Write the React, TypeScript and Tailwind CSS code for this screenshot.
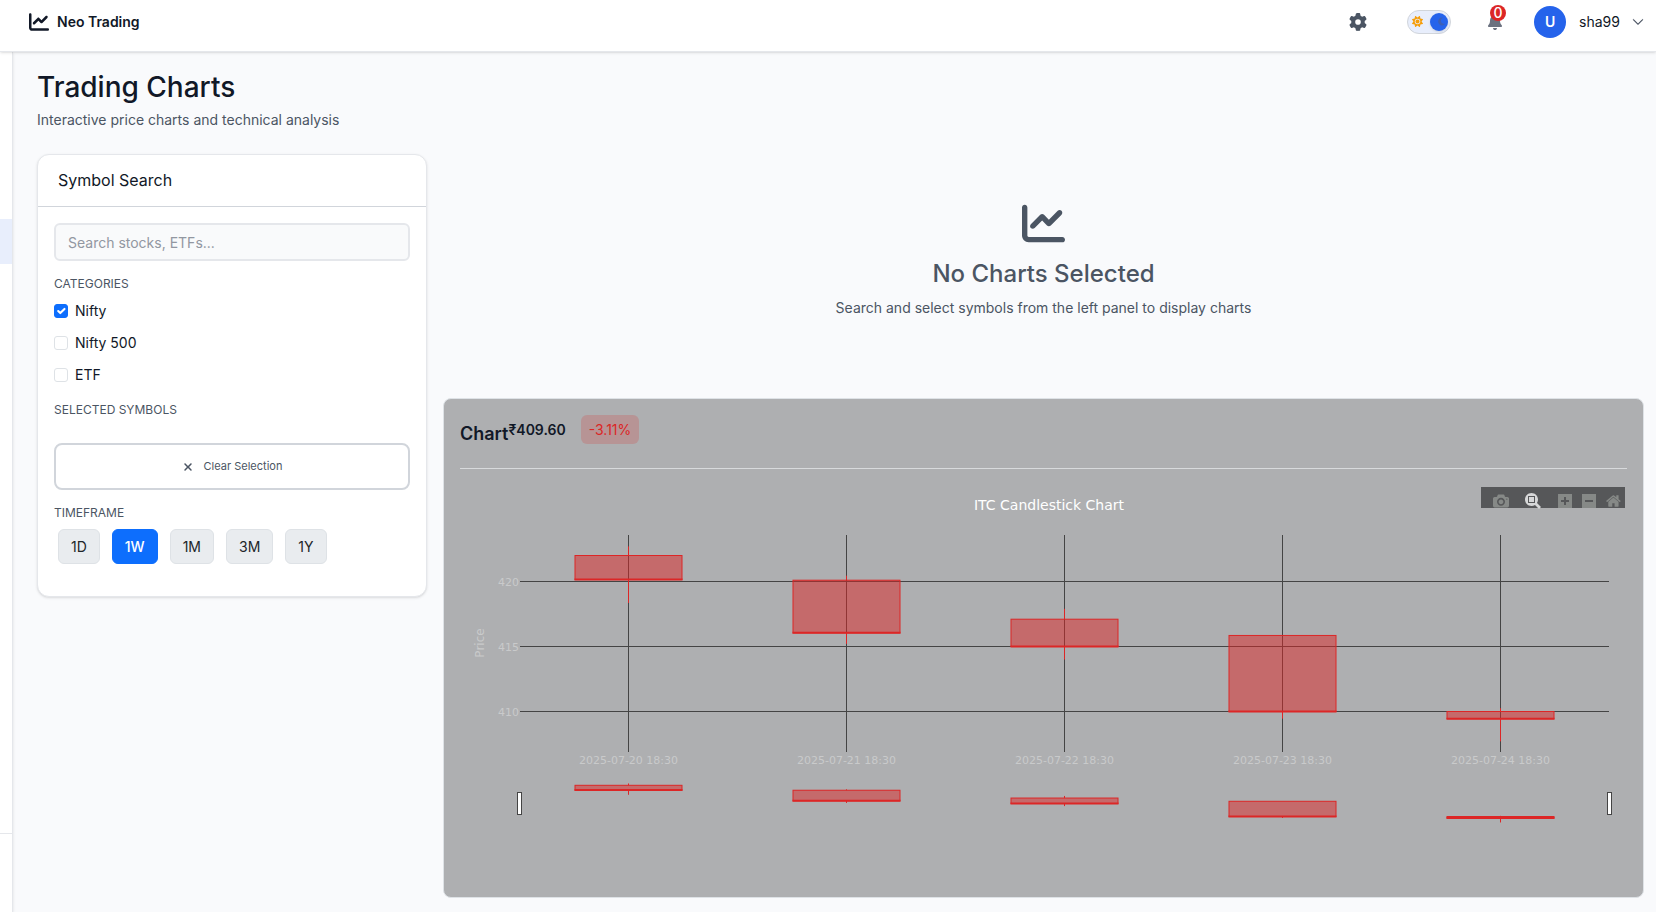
import { useState } from "react";
import { FaBell, FaChartLine, FaGear, FaMoon, FaSun, FaXmark } from "react-icons/fa6";
import { BsChevronDown } from "react-icons/bs";

type Candle = { time: string; open: number; high: number; low: number; close: number };

const candles: Candle[] = [
  { time: "2025-07-20 18:30", open: 422, high: 422.7, low: 418.35, close: 420.15 },
  { time: "2025-07-21 18:30", open: 420.1, high: 420.45, low: 415.2, close: 416.05 },
  { time: "2025-07-22 18:30", open: 417.1, high: 417.9, low: 414, close: 415 },
  { time: "2025-07-23 18:30", open: 415.85, high: 415.85, low: 409.45, close: 410 },
  { time: "2025-07-24 18:30", open: 410, high: 410.25, low: 407.7, close: 409.45 },
];

const PLOT = { left: 60, right: 1149, top: 66, bottom: 283 };
const xAt = (i: number) => 168.5 + i * 218;
const yAt = (price: number) => 242.5 + (410 - price) * 13;
const yMini = (price: number) => 347.5 + (410 - price) * 2.6;

function CandleShape({ x, candle, y }: { x: number; candle: Candle; y: (p: number) => number }) {
  const top = y(candle.open);
  const bottom = y(candle.close);
  return (
    <g stroke="#dc2626" strokeWidth="1">
      <path d={`M${x} ${y(candle.high)}V${top}M${x} ${bottom}V${y(candle.low)}`} fill="none" />
      <rect x={x - 53.5} y={top} width="107" height={bottom - top} fill="#dc2626" fillOpacity="0.5" />
      <path d={`M${x - 54} ${bottom}H${x + 54}`} strokeWidth="2" />
    </g>
  );
}

function CandlestickChart() {
  return (
    <svg viewBox="0 0 1167 412" className="block h-auto w-full" role="img" aria-label="ITC Candlestick Chart" fontFamily="'DejaVu Sans', sans-serif">
      <text x="589" y="41" textAnchor="middle" fontSize="14" fill="#ffffff">ITC Candlestick Chart</text>
      <g stroke="#444444" strokeWidth="1">
        {candles.map((c, i) => (
          <line key={c.time} x1={xAt(i)} x2={xAt(i)} y1={PLOT.top} y2={PLOT.bottom} />
        ))}
        {[420, 415, 410].map((p) => (
          <line key={p} x1={PLOT.left} x2={PLOT.right} y1={yAt(p)} y2={yAt(p)} />
        ))}
      </g>
      <g fontSize="11" fill="#c9cacb">
        {[420, 415, 410].map((p) => (
          <text key={p} x="59" y={yAt(p) + 4.5} textAnchor="end">{p}</text>
        ))}
        {candles.map((c, i) => (
          <text key={c.time} x={xAt(i)} y="295" textAnchor="middle">{c.time}</text>
        ))}
      </g>
      <text transform="translate(24 174) rotate(-90)" textAnchor="middle" fontSize="12" fill="#c9cacb">Price</text>
      {candles.map((c, i) => (
        <CandleShape key={c.time} x={xAt(i)} candle={c} y={yAt} />
      ))}
      {candles.map((c, i) => (
        <CandleShape key={c.time} x={xAt(i)} candle={c} y={yMini} />
      ))}
      <g fill="#ffffff" stroke="#444444" strokeWidth="1">
        <rect x="57.5" y="323.5" width="4" height="22" />
        <rect x="1147.5" y="323.5" width="4" height="22" />
      </g>
    </svg>
  );
}

const CAMERA = "m500 450c-83 0-150-67-150-150 0-83 67-150 150-150 83 0 150 67 150 150 0 83-67 150-150 150z m400 150h-120c-16 0-34 13-39 29l-31 93c-6 15-23 28-40 28h-340c-16 0-34-13-39-28l-31-94c-6-15-23-28-40-28h-120c-55 0-100-45-100-100v-450c0-55 45-100 100-100h800c55 0 100 45 100 100v450c0 55-45 100-100 100z m-400-550c-138 0-250 112-250 250 0 138 112 250 250 250 138 0 250-112 250-250 0-138-112-250-250-250z m365 380c-19 0-35 16-35 35 0 19 16 35 35 35 19 0 35-16 35-35 0-19-16-35-35-35z";
const ZOOM = "m1000-25l-250 251c40 63 63 138 63 218 0 224-182 406-407 406-224 0-406-182-406-406s183-406 407-406c80 0 155 22 218 62l250-250 125 125z m-812 250l0 438 437 0 0-438-437 0z m62 375l313 0 0-312-313 0 0 312z";
const PLUS = "m1 787l0-875 875 0 0 875-875 0z m687-500l-187 0 0-187-125 0 0 187-188 0 0 125 188 0 0 187 125 0 0-187 187 0 0-125z";
const MINUS = "m0 788l0-876 876 0 0 876-876 0z m688-500l-500 0 0 125 500 0 0-125z";
const HOME = "m786 296v-267q0-15-11-26t-25-10h-214v214h-143v-214h-214q-15 0-25 10t-11 26v267q0 1 0 2t0 2l321 264 321-264q1-1 1-4z m124 39l-34-41q-5-5-12-6h-2q-7 0-12 3l-386 322-386-322q-7-4-13-4-7 2-12 7l-35 41q-4 5-3 13t6 12l401 334q18 15 42 15t43-15l136-114v109q0 8 5 13t13 5h107q8 0 13-5t5-13v-227l122-102q5-5 6-12t-4-13z";

function ToolButton({ label, path, width = 1000, active = false }: { label: string; path: string; width?: number; active?: boolean }) {
  return (
    <button type="button" aria-label={label} className={active ? "text-[#d6d7d8]" : "text-[#868987]"}>
      <svg viewBox={`0 0 ${width} 1000`} className="h-4 w-auto" fill="currentColor">
        <path transform="matrix(1 0 0 -1 0 850)" d={path} />
      </svg>
    </button>
  );
}

function Header() {
  const [dark, setDark] = useState(true);
  return (
    <header className="relative z-10 flex h-[52px] items-start justify-between border-b border-[#e5e7eb] bg-white pr-3 pl-[29px] shadow-sm">
      <a href="#home" className="flex h-[43px] items-center gap-2 text-sm font-semibold">
        <FaChartLine size={20} />
        Neo Trading
      </a>
      <div className="flex h-[43px] items-center">
        <button type="button" aria-label="Settings" className="mr-10 text-[#4b5563]">
          <FaGear size={18} />
        </button>
        <label className="relative mr-9 flex h-6 w-11 cursor-pointer items-center rounded-full border border-[#d1d5db] bg-[#e8eefc]">
          <input type="checkbox" aria-label="Dark theme" checked={dark} onChange={() => setDark(!dark)} className="sr-only" />
          <FaSun size={11} className="ml-1 text-[#f59e0b]" />
          <span className={`absolute flex size-[18px] items-center justify-end rounded-full bg-[#2563eb] pr-[2px] text-[#3c5fb5] shadow-sm ${dark ? "right-[2px]" : "left-[2px]"}`}>
            <FaMoon size={9} />
          </span>
        </label>
        <button type="button" aria-label="Notifications" className="relative mr-[31px] text-[#6b7280]">
          <FaBell size={16} />
          <span className="absolute -top-[9px] left-[3px] flex size-4 items-center justify-center rounded-full bg-[#dc2626] text-sm leading-4 font-medium text-white">0</span>
        </button>
        <button type="button" className="flex items-center text-sm">
          <span className="mr-[13px] flex size-8 items-center justify-center rounded-full bg-[#2563eb] font-semibold text-white">U</span>
          sha99
          <BsChevronDown size={12} strokeWidth={0.5} className="ml-3 text-[#374151]" />
        </button>
      </div>
    </header>
  );
}

function SymbolSearch() {
  const [checked, setChecked] = useState<string[]>(["Nifty"]);
  const [frame, setFrame] = useState("1W");
  const toggle = (name: string) =>
    setChecked((list) => (list.includes(name) ? list.filter((n) => n !== name) : [...list, name]));
  return (
    <section className="self-start rounded-xl border border-[#e5e7eb] bg-white shadow-sm">
      <h2 className="border-b border-[#d1d5db] px-5 pt-[13px] pb-[14px] text-base">Symbol Search</h2>
      <div className="px-4 pt-4 pb-8">
        <input
          type="text"
          aria-label="Search symbols"
          placeholder="Search stocks, ETFs..."
          className="block h-[38px] w-full rounded-md border-2 border-[#e5e7eb] bg-[#f9fafb] px-3 text-sm placeholder:text-[#9297a1]"
        />
        <h3 className="mt-[14px] text-xs leading-[18px] text-[#4b5563]">CATEGORIES</h3>
        <div className="mt-[7px] flex flex-col gap-[11px]">
          {["Nifty", "Nifty 500", "ETF"].map((name) => (
            <label key={name} className="flex h-[21px] items-center gap-[7px] text-sm">
              <span className="grid size-[14px]">
                <input
                  type="checkbox"
                  checked={checked.includes(name)}
                  onChange={() => toggle(name)}
                  className="col-start-1 row-start-1 size-[14px] appearance-none rounded-[3px] border border-[#dee2e6] bg-white checked:border-[#0d6efd] checked:bg-[#0d6efd]"
                />
                {checked.includes(name) && (
                  <svg viewBox="0 0 20 20" className="pointer-events-none col-start-1 row-start-1 size-[14px]" fill="none" stroke="#fff" strokeWidth="3" strokeLinecap="round" strokeLinejoin="round">
                    <path d="m6 10 3 3 6-6" />
                  </svg>
                )}
              </span>
              {name}
            </label>
          ))}
        </div>
        <h3 className="mt-4 text-xs leading-[18px] text-[#4b5563]">SELECTED SYMBOLS</h3>
        <button type="button" className="mt-6 flex h-[47px] w-full items-center justify-center gap-[10px] rounded-lg border-2 border-[#d1d5db] bg-white text-[11px] text-[#4b5563]">
          <FaXmark size={12} />
          Clear Selection
        </button>
        <h3 className="mt-[14px] text-xs leading-[18px] text-[#4b5563]">TIMEFRAME</h3>
        <div className="mt-[7px] flex gap-3 px-1">
          {["1D", "1W", "1M", "3M", "1Y"].map((f) => (
            <button
              key={f}
              type="button"
              aria-pressed={f === frame}
              onClick={() => setFrame(f)}
              className={`h-[35px] rounded-md border px-3 text-sm ${f === frame ? "border-[#0d6efd] bg-[#0d6efd] font-medium text-white" : "border-[#dee2e6] bg-[#e9ecef] text-[#212529]"}`}
            >
              {f}
            </button>
          ))}
        </div>
      </div>
    </section>
  );
}

export default function App() {
  return (
    <div className="flex min-h-screen flex-col bg-[#f9fafc] font-[Inter,sans-serif] text-[#111827]">
      <Header />
      <div className="flex flex-1">
        <aside className="flex w-[13px] shrink-0 flex-col border-r border-[#e5e7eb] bg-white shadow-sm">
          <a href="#charts" aria-label="Charts" className="mt-[167px] block h-[45px] bg-[#e8eefc]" />
          <div className="mt-auto h-[79px] border-t border-[#e5e7eb]" />
        </aside>
        <main className="min-w-0 flex-1 pt-[17px] pr-3 pb-[14px] pl-6">
          <h1 className="text-[28px] leading-9 font-medium">Trading Charts</h1>
          <p className="mt-[5px] text-sm text-[#4b5563]">Interactive price charts and technical analysis</p>
          <div className="mt-6 grid grid-cols-[390px_minmax(0,1fr)] gap-4">
            <SymbolSearch />
            <div>
              <section className="flex flex-col items-center pt-12 pb-20 text-[#4b5563]">
                <FaChartLine size={43} />
                <h2 className="mt-[14px] text-2xl leading-[30px] font-medium">No Charts Selected</h2>
                <p className="mt-2 text-sm leading-[21px]">Search and select symbols from the left panel to display charts</p>
              </section>
              <section className="rounded-lg border border-[#dee2e6] bg-[#aeafb1] p-4">
                <div className="flex h-[54px] items-start border-b border-[#d8dadc]">
                  <h2 className="mt-[5px] text-lg leading-[27px] font-semibold">Chart</h2>
                  <span className="mr-[15px] text-sm leading-[29px] font-semibold">₹409.60</span>
                  <span className="rounded-md bg-[#dc2626]/20 px-2 text-sm leading-[29px] text-[#dc2626]">-3.11%</span>
                </div>
                <div className="relative">
                  <CandlestickChart />
                  <div className="absolute top-[18px] right-[2px] flex h-[21px] w-36 items-start bg-[#565759] pt-[6px] pl-3">
                    <div className="flex gap-4">
                      <ToolButton label="Download plot as a png" path={CAMERA} />
                      <ToolButton label="Zoom" path={ZOOM} active />
                    </div>
                    <div className="ml-[17px] flex gap-[10px]">
                      <ToolButton label="Zoom in" path={PLUS} width={875} />
                      <ToolButton label="Zoom out" path={MINUS} width={875} />
                      <ToolButton label="Reset axes" path={HOME} width={929} />
                    </div>
                  </div>
                </div>
              </section>
            </div>
          </div>
        </main>
      </div>
    </div>
  );
}
